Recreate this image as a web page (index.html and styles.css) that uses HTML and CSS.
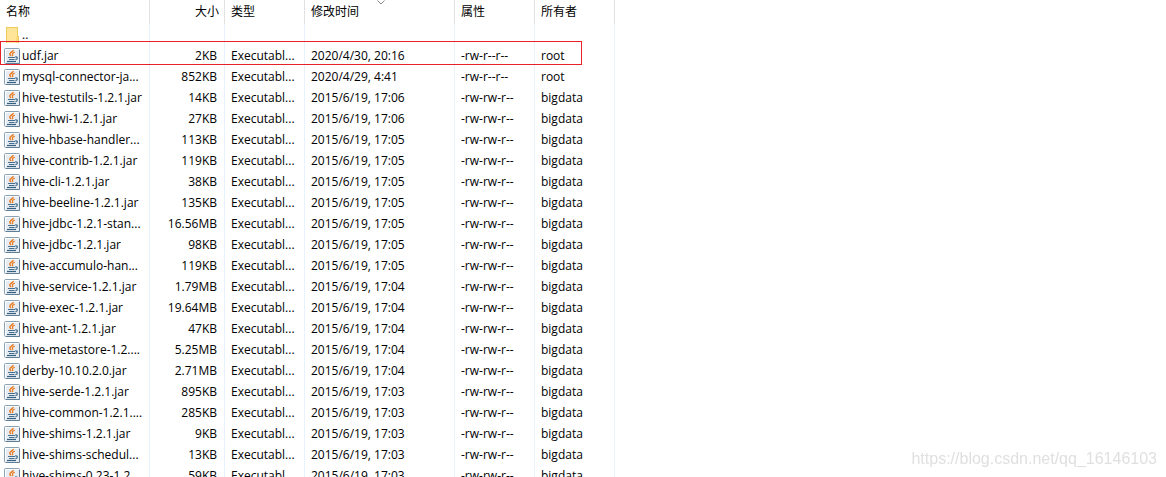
FILE: index.html
```html
<!DOCTYPE html>
<html lang="zh-CN">
<head>
    <meta charset="UTF-8">
    <meta name="viewport" content="width=device-width, initial-scale=1.0">
    <title>文件列表</title>
    <link rel="stylesheet" href="styles.css">
</head>
<body>

    <!-- Shared icons -->
    <svg class="sprite" aria-hidden="true">
        <symbol id="jar" viewBox="0 0 16 16">
            <rect x="0.5" y="0.5" width="15" height="15" rx="1" fill="#e6ecf1" stroke="#8aa2b5"/>
            <path d="M1.5 14.5V1.5H14.5" fill="none" stroke="#fff"/>
            <path d="M15.5 2V15.5H2" fill="none" stroke="#5f7f98"/>
            <path d="M9.2 1.8C9.6 3.6 5.6 4.6 5.8 6.2C5.9 7 6.8 7.4 7 8.2" fill="none" stroke="#ea7a1c" stroke-width="1.4"/>
            <path d="M10.8 4.2C9 4.8 7.8 5.6 8.6 6.6C9.2 7.3 8.8 7.8 8.4 8.2" fill="none" stroke="#ea7a1c" stroke-width="1.2"/>
            <path d="M4 9.5H11M5 11.5H10.5" fill="none" stroke="#456f8f"/>
            <path d="M3 13.5H12" fill="none" stroke="#33617f" stroke-width="1.2"/>
            <path d="M11.2 8.9C14 8.6 14 11 11.4 11.6" fill="none" stroke="#456f8f" stroke-width="1.2"/>
        </symbol>
        <symbol id="folder" viewBox="0 0 16 16">
            <path d="M2 0H14V9H15V16H2Z" fill="#eccb5c"/>
            <path d="M3 1H13V16H3Z" fill="#ffe597"/>
            <path d="M13 10H14V16H12V11Z" fill="#fbd978"/>
        </symbol>
    </svg>

    <div class="panel">
        <table class="files">
            <colgroup>
                <col class="col-name">
                <col class="col-size">
                <col class="col-type">
                <col class="col-time">
                <col class="col-attr">
                <col class="col-owner">
            </colgroup>
            <thead>
                <tr>
                    <th>名称</th>
                    <th class="size">大小</th>
                    <th>类型</th>
                    <th class="sorted">修改时间<svg class="arrow" viewBox="0 0 8 5"><path d="M0.5 0.5L4 4L7.5 0.5" fill="none" stroke="#8a8a8a"/></svg></th>
                    <th>属性</th>
                    <th>所有者</th>
                </tr>
            </thead>
            <tbody>
                <tr><td><svg class="icon"><use href="#folder"/></svg>..</td><td></td><td></td><td></td><td></td><td></td></tr>
                <tr><td><svg class="icon"><use href="#jar"/></svg>udf.jar</td><td class="size">2KB</td><td>Executabl...</td><td>2020/4/30, 20:16</td><td>-rw-r--r--</td><td>root</td></tr>
                <tr><td><svg class="icon"><use href="#jar"/></svg>mysql-connector-ja...</td><td class="size">852KB</td><td>Executabl...</td><td>2020/4/29, 4:41</td><td>-rw-r--r--</td><td>root</td></tr>
                <tr><td><svg class="icon"><use href="#jar"/></svg>hive-testutils-1.2.1.jar</td><td class="size">14KB</td><td>Executabl...</td><td>2015/6/19, 17:06</td><td>-rw-rw-r--</td><td>bigdata</td></tr>
                <tr><td><svg class="icon"><use href="#jar"/></svg>hive-hwi-1.2.1.jar</td><td class="size">27KB</td><td>Executabl...</td><td>2015/6/19, 17:06</td><td>-rw-rw-r--</td><td>bigdata</td></tr>
                <tr><td><svg class="icon"><use href="#jar"/></svg>hive-hbase-handler...</td><td class="size">113KB</td><td>Executabl...</td><td>2015/6/19, 17:05</td><td>-rw-rw-r--</td><td>bigdata</td></tr>
                <tr><td><svg class="icon"><use href="#jar"/></svg>hive-contrib-1.2.1.jar</td><td class="size">119KB</td><td>Executabl...</td><td>2015/6/19, 17:05</td><td>-rw-rw-r--</td><td>bigdata</td></tr>
                <tr><td><svg class="icon"><use href="#jar"/></svg>hive-cli-1.2.1.jar</td><td class="size">38KB</td><td>Executabl...</td><td>2015/6/19, 17:05</td><td>-rw-rw-r--</td><td>bigdata</td></tr>
                <tr><td><svg class="icon"><use href="#jar"/></svg>hive-beeline-1.2.1.jar</td><td class="size">135KB</td><td>Executabl...</td><td>2015/6/19, 17:05</td><td>-rw-rw-r--</td><td>bigdata</td></tr>
                <tr><td><svg class="icon"><use href="#jar"/></svg>hive-jdbc-1.2.1-stan...</td><td class="size">16.56MB</td><td>Executabl...</td><td>2015/6/19, 17:05</td><td>-rw-rw-r--</td><td>bigdata</td></tr>
                <tr><td><svg class="icon"><use href="#jar"/></svg>hive-jdbc-1.2.1.jar</td><td class="size">98KB</td><td>Executabl...</td><td>2015/6/19, 17:05</td><td>-rw-rw-r--</td><td>bigdata</td></tr>
                <tr><td><svg class="icon"><use href="#jar"/></svg>hive-accumulo-han...</td><td class="size">119KB</td><td>Executabl...</td><td>2015/6/19, 17:05</td><td>-rw-rw-r--</td><td>bigdata</td></tr>
                <tr><td><svg class="icon"><use href="#jar"/></svg>hive-service-1.2.1.jar</td><td class="size">1.79MB</td><td>Executabl...</td><td>2015/6/19, 17:04</td><td>-rw-rw-r--</td><td>bigdata</td></tr>
                <tr><td><svg class="icon"><use href="#jar"/></svg>hive-exec-1.2.1.jar</td><td class="size">19.64MB</td><td>Executabl...</td><td>2015/6/19, 17:04</td><td>-rw-rw-r--</td><td>bigdata</td></tr>
                <tr><td><svg class="icon"><use href="#jar"/></svg>hive-ant-1.2.1.jar</td><td class="size">47KB</td><td>Executabl...</td><td>2015/6/19, 17:04</td><td>-rw-rw-r--</td><td>bigdata</td></tr>
                <tr><td><svg class="icon"><use href="#jar"/></svg>hive-metastore-1.2....</td><td class="size">5.25MB</td><td>Executabl...</td><td>2015/6/19, 17:04</td><td>-rw-rw-r--</td><td>bigdata</td></tr>
                <tr><td><svg class="icon"><use href="#jar"/></svg>derby-10.10.2.0.jar</td><td class="size">2.71MB</td><td>Executabl...</td><td>2015/6/19, 17:04</td><td>-rw-rw-r--</td><td>bigdata</td></tr>
                <tr><td><svg class="icon"><use href="#jar"/></svg>hive-serde-1.2.1.jar</td><td class="size">895KB</td><td>Executabl...</td><td>2015/6/19, 17:03</td><td>-rw-rw-r--</td><td>bigdata</td></tr>
                <tr><td><svg class="icon"><use href="#jar"/></svg>hive-common-1.2.1....</td><td class="size">285KB</td><td>Executabl...</td><td>2015/6/19, 17:03</td><td>-rw-rw-r--</td><td>bigdata</td></tr>
                <tr><td><svg class="icon"><use href="#jar"/></svg>hive-shims-1.2.1.jar</td><td class="size">9KB</td><td>Executabl...</td><td>2015/6/19, 17:03</td><td>-rw-rw-r--</td><td>bigdata</td></tr>
                <tr><td><svg class="icon"><use href="#jar"/></svg>hive-shims-schedul...</td><td class="size">13KB</td><td>Executabl...</td><td>2015/6/19, 17:03</td><td>-rw-rw-r--</td><td>bigdata</td></tr>
                <tr><td><svg class="icon"><use href="#jar"/></svg>hive-shims-0.23-1.2...</td><td class="size">59KB</td><td>Executabl...</td><td>2015/6/19, 17:03</td><td>-rw-rw-r--</td><td>bigdata</td></tr>
            </tbody>
        </table>
        <div class="highlight"></div>
    </div>

    <div class="watermark">https://blog.csdn.net/qq_16146103</div>

</body>
</html>
```
FILE: styles.css
```css
body {
    margin: 0;
    height: 100vh;
    overflow: hidden;
    background: #fff;
    color: #000;
    font-family: "Open Sans", "Noto Sans CJK SC", sans-serif;
    font-size: 12px;
}

.sprite {
    position: absolute;
    width: 0;
    height: 0;
}

.panel {
    position: relative;
}

.files {
    width: 615px;
    table-layout: fixed;
    border-collapse: separate;
    border-spacing: 0;
}

.col-name {
    width: 150px;
}

.col-size {
    width: 75px;
}

.col-type,
.col-attr,
.col-owner {
    width: 80px;
}

.col-time {
    width: 150px;
}

th,
td {
    box-sizing: border-box;
    height: 21px;
    padding: 0 0 0 6px;
    border-right: 1px solid #e8f2fc;
    font-weight: normal;
    line-height: 20px;
    text-align: left;
    white-space: nowrap;
}

th {
    height: 24px;
    border-right-color: #e2e2e2;
}

td:first-child {
    padding-left: 4px;
}

.files .size {
    padding: 0 7px 0 0;
    text-align: right;
}

.files th.size {
    padding-right: 5px;
}

.icon {
    width: 16px;
    height: 16px;
    margin-right: 2px;
    vertical-align: middle;
}

/* Sort direction mark above the column title */
.sorted {
    position: relative;
}

.arrow {
    position: absolute;
    top: 0;
    left: 72px;
    width: 8px;
    height: 5px;
}

/* Red frame over the udf.jar row */
.highlight {
    position: absolute;
    top: 41px;
    left: 0;
    box-sizing: border-box;
    width: 582px;
    height: 24px;
    border: 1px solid #e8202a;
}

.watermark {
    position: fixed;
    right: 9px;
    bottom: 8px;
    color: #e0e0e0;
    font-family: "Liberation Sans", Arial, sans-serif;
    font-size: 16px;
    line-height: 20px;
}
```
